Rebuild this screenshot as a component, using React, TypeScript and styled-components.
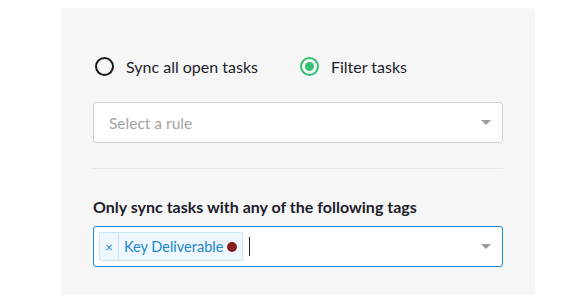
import React from "react";
import styled, { createGlobalStyle } from "styled-components";

const GlobalStyle = createGlobalStyle`
  html, body {
    margin: 0;
    padding: 0;
    background: #ffffff;
    font-family: Lato, "Open Sans", Arial, sans-serif;
  }
`;

const Panel = styled.div`
  margin: 8px 0 0 61px;
  width: 474px;
  height: 300px;
  box-sizing: border-box;
  padding: 49px 32px 0;
  background: #f6f6f6;
  border-radius: 4px 4px 0 0;
`;

const RadioRow = styled.div`
  display: flex;
  align-items: center;
  gap: 42px;
  margin-left: 2px;
  height: 19px;
`;

const RadioOption = styled.label`
  display: flex;
  align-items: center;
  gap: 12px;
  font-size: 16px;
  color: #1d1d2b;
  cursor: pointer;
`;

const RadioCircle = styled.span<{ $checked?: boolean }>`
  width: 19px;
  height: 19px;
  box-sizing: border-box;
  border-radius: 50%;
  border: 2px solid ${(p) => (p.$checked ? "#35c172" : "#1a1a1a")};
  display: flex;
  align-items: center;
  justify-content: center;

  &::after {
    content: "";
    width: 9px;
    height: 9px;
    border-radius: 50%;
    background: #35c172;
    display: ${(p) => (p.$checked ? "block" : "none")};
  }
`;

const SelectBox = styled.div<{ $focused?: boolean }>`
  margin-top: 26px;
  height: 41px;
  box-sizing: border-box;
  display: flex;
  align-items: center;
  padding: 0 9px 0 15px;
  background: #ffffff;
  border: 1px solid ${(p) => (p.$focused ? "#1a8ad4" : "#cfcfcf")};
  border-radius: 3px;
`;

const Placeholder = styled.span`
  flex: 1;
  font-size: 15.5px;
  color: #a3a3a3;
`;

const Arrow = styled.span`
  width: 0;
  height: 0;
  border-left: 5px solid transparent;
  border-right: 5px solid transparent;
  border-top: 5px solid #9a9a9a;
  margin-right: 2px;
`;

const Divider = styled.hr`
  margin: 25px 0 0;
  border: none;
  border-top: 1px solid #e6e6e6;
`;

const Label = styled.div`
  margin-top: 28px;
  font-size: 16px;
  font-weight: 700;
  color: #1d1d2b;
`;

const TagInput = styled(SelectBox)`
  margin-top: 10px;
  padding-left: 5px;
  gap: 0;
`;

const Tag = styled.div`
  display: flex;
  align-items: stretch;
  height: 29px;
  box-sizing: border-box;
  background: #eef7fd;
  border: 1px solid #c8e4f6;
  border-radius: 2px;
  color: #1b87cf;
  font-size: 14.5px;
`;

const TagRemove = styled.span`
  width: 18px;
  display: flex;
  align-items: center;
  justify-content: center;
  border-right: 1px solid #c8e4f6;
  font-size: 13px;
`;

const TagText = styled.span`
  display: flex;
  align-items: center;
  gap: 4px;
  padding: 0 5px 0 5px;
`;

const Dot = styled.span<{ $color: string }>`
  width: 10px;
  height: 10px;
  border-radius: 50%;
  background: ${(p) => p.$color};
`;

const Caret = styled.span`
  width: 1px;
  height: 19px;
  background: #222;
  margin-left: 6px;
  flex: none;
`;

const Spacer = styled.span`
  flex: 1;
`;

export default function App() {
  return (
    <>
      <GlobalStyle />
      <Panel>
        <RadioRow>
          <RadioOption>
            <RadioCircle />
            Sync all open tasks
          </RadioOption>
          <RadioOption>
            <RadioCircle $checked />
            Filter tasks
          </RadioOption>
        </RadioRow>
        <SelectBox>
          <Placeholder>Select a rule</Placeholder>
          <Arrow />
        </SelectBox>
        <Divider />
        <Label>Only sync tasks with any of the following tags</Label>
        <TagInput $focused>
          <Tag>
            <TagRemove>×</TagRemove>
            <TagText>
              Key Deliverable
              <Dot $color="#8c1c1c" />
            </TagText>
          </Tag>
          <Caret />
          <Spacer />
          <Arrow />
        </TagInput>
      </Panel>
    </>
  );
}
